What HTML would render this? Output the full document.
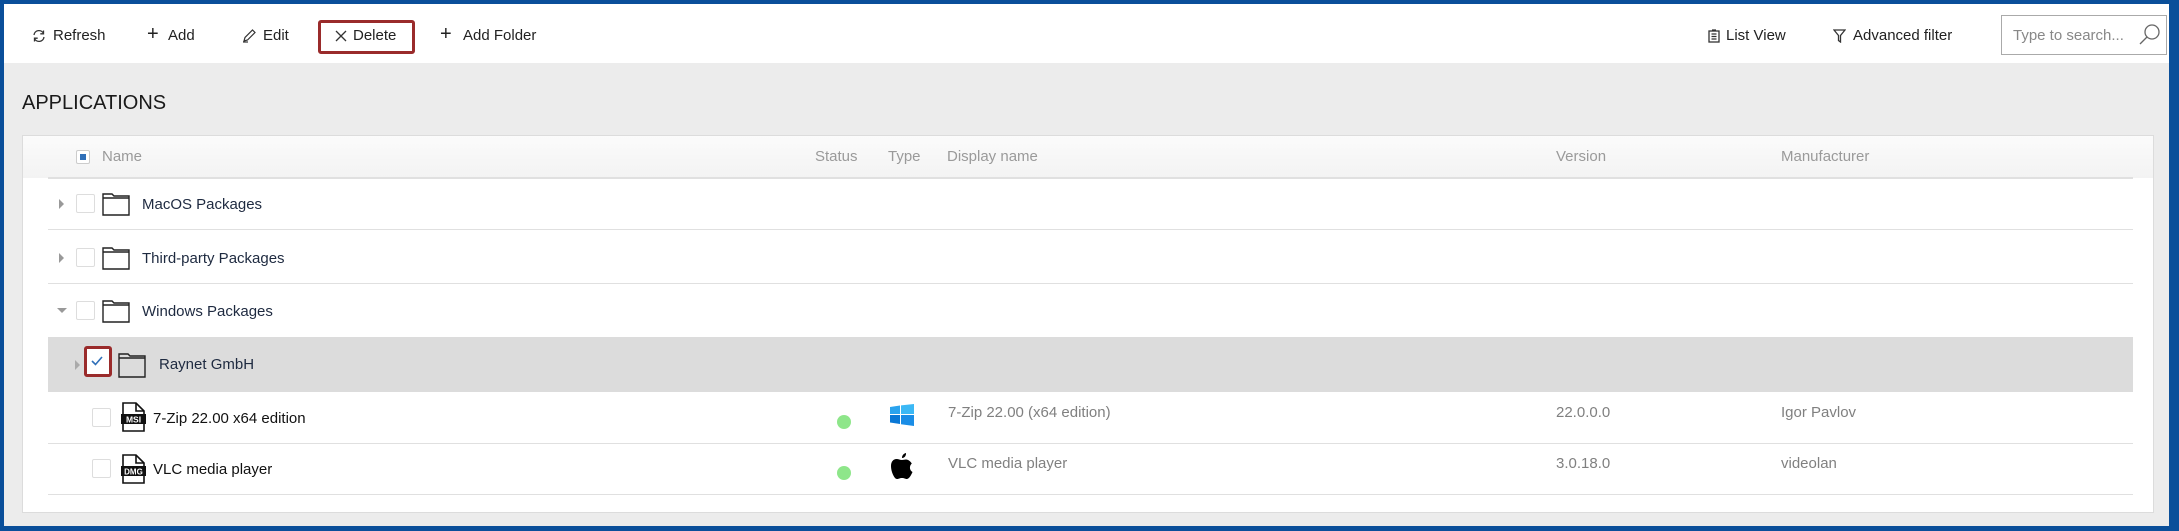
<!DOCTYPE html>
<html><head><meta charset="utf-8"><style>
*{box-sizing:border-box;margin:0;padding:0}
body{width:2179px;height:531px;background:#0a4f9a;position:relative;overflow:hidden;font-family:"Liberation Sans",sans-serif;}
.main{position:absolute;left:4px;top:4px;width:2165px;height:522px;background:#ececec;}
.tb{position:absolute;left:0;top:0;width:100%;height:59px;background:#fff;}
.a{position:absolute;white-space:nowrap;}
.t{font-size:15px;color:#222;line-height:18px;}
.panel{position:absolute;left:18px;top:131px;width:2132px;height:378px;background:#fff;border:1px solid #dcdcdc;}
.hdr{position:absolute;left:0;top:0;width:100%;height:42px;background:linear-gradient(#fbfbfb,#f3f3f3);}
.h{font-size:15px;color:#9a9a9a;line-height:18px;}
.line{position:absolute;left:25px;width:2085px;height:2px;background:#e0e0e0;}
.cb{position:absolute;width:19px;height:19px;border:1px solid #ddd;background:#fff;border-radius:2px;}
.n{font-size:15px;color:#1e2a40;line-height:18px;}
.g{font-size:15px;color:#808080;line-height:18px;}
.arr{position:absolute;width:0;height:0;border-top:5px solid transparent;border-bottom:5px solid transparent;border-left:5px solid #999;}
.dot{position:absolute;width:14px;height:14px;border-radius:50%;background:#8ee68a;}
</style></head><body>
<div class="main">
 <div class="tb">
  <svg class="a" style="left:28px;top:25px" width="14" height="14" viewBox="0 0 14 14" fill="none" stroke="#333" stroke-width="1.3"><path d="M2 6A5 5 0 0 1 11.5 4.5M12 8A5 5 0 0 1 2.5 9.5"/><path d="M11.5 1.5V4.8H8.3M2.5 12.5V9.2H5.7"/></svg>
  <div class="a t" style="left:49px;top:23px">Refresh</div>
  <div class="a t" style="left:143px;top:21px;font-size:20px">+</div>
  <div class="a t" style="left:164px;top:23px">Add</div>
  <svg class="a" style="left:238px;top:25px" width="14" height="14" viewBox="0 0 14 14" fill="none" stroke="#333" stroke-width="1.2"><path d="M2 12L3 8.5L10.5 1L13 3.5L5.5 11Z"/><path d="M1 13H6"/></svg>
  <div class="a t" style="left:259px;top:23px">Edit</div>
  <div class="a" style="left:314px;top:16px;width:97px;height:34px;border:3px solid #9a2b2b;border-radius:3px"></div>
  <svg class="a" style="left:331px;top:26px" width="12" height="12" viewBox="0 0 12 12" stroke="#333" stroke-width="1.3"><path d="M1 1L11 11M11 1L1 11"/></svg>
  <div class="a t" style="left:349px;top:23px">Delete</div>
  <div class="a t" style="left:436px;top:21px;font-size:20px">+</div>
  <div class="a t" style="left:459px;top:23px">Add Folder</div>
  <svg class="a" style="left:1704px;top:25px" width="12" height="14" viewBox="0 0 12 14" fill="none" stroke="#333" stroke-width="1.3"><rect x="1" y="2" width="10" height="11"/><path d="M3.5 5H8.5M3.5 7.5H8.5M3.5 10H8.5M4 1H8"/></svg>
  <div class="a t" style="left:1722px;top:23px">List View</div>
  <svg class="a" style="left:1829px;top:25px" width="13" height="14" viewBox="0 0 13 14" fill="none" stroke="#333" stroke-width="1.3"><path d="M1 1H12L7.5 6.5V13L5.5 11.5V6.5Z"/></svg>
  <div class="a t" style="left:1849px;top:23px">Advanced filter</div>
  <div class="a" style="left:1997px;top:11px;width:166px;height:40px;border:1px solid #aaa;background:#fff"></div>
  <div class="a t" style="left:2009px;top:23px;color:#888">Type to search...</div>
  <svg class="a" style="left:2134px;top:18px" width="24" height="24" viewBox="0 0 24 24" fill="none" stroke="#666" stroke-width="1.3"><circle cx="14" cy="10" r="7"/><path d="M9 15L2 22"/></svg>
 </div>
 <div class="a" style="left:18px;top:87px;font-size:20px;color:#1a1a1a;line-height:24px">APPLICATIONS</div>
 <div class="panel">
  <div class="hdr"></div>
  <div class="cb" style="left:53px;top:14px;width:14px;height:14px;border-color:#ccc"><div style="position:absolute;left:3px;top:3px;width:6px;height:6px;background:#2f6fb8"></div></div>
  <div class="a h" style="left:79px;top:12px">Name</div>
  <div class="a h" style="left:792px;top:12px">Status</div>
  <div class="a h" style="left:865px;top:12px">Type</div>
  <div class="a h" style="left:924px;top:12px">Display name</div>
  <div class="a h" style="left:1533px;top:12px">Version</div>
  <div class="a h" style="left:1758px;top:12px">Manufacturer</div>
  <div class="line" style="top:41px"></div>

  <div class="arr" style="left:36px;top:63px"></div>
  <div class="cb" style="left:53px;top:58px"></div>
  <svg class="a" style="left:79px;top:56px" width="28" height="24" viewBox="0 0 28 24" fill="none" stroke="#222" stroke-width="1.4"><path d="M1 2H10L12 4H27V23H1Z M1 6H27"/></svg>
  <div class="a n" style="left:119px;top:60px">MacOS Packages</div>
  <div class="line" style="top:93px;height:1px"></div>
  <div class="arr" style="left:36px;top:117px"></div>
  <div class="cb" style="left:53px;top:112px"></div>
  <svg class="a" style="left:79px;top:110px" width="28" height="24" viewBox="0 0 28 24" fill="none" stroke="#222" stroke-width="1.4"><path d="M1 2H10L12 4H27V23H1Z M1 6H27"/></svg>
  <div class="a n" style="left:119px;top:114px">Third-party Packages</div>
  <div class="line" style="top:147px;height:1px"></div>
  <div class="a" style="left:34px;top:172px;border-left:5px solid transparent;border-right:5px solid transparent;border-top:5px solid #999"></div>
  <div class="cb" style="left:53px;top:165px"></div>
  <svg class="a" style="left:79px;top:163px" width="28" height="24" viewBox="0 0 28 24" fill="none" stroke="#222" stroke-width="1.4"><path d="M1 2H10L12 4H27V23H1Z M1 6H27"/></svg>
  <div class="a n" style="left:119px;top:167px">Windows Packages</div>
  <div class="a" style="left:25px;top:201px;width:2085px;height:55px;background:#dcdcdc"></div>
  <div class="arr" style="left:52px;top:224px;border-left-color:#aaa"></div>
  <div class="a" style="left:61px;top:210px;width:28px;height:31px;border:3px solid #9a2b2b;border-radius:3px;background:#fff"></div>
  <svg class="a" style="left:67px;top:219px" width="14" height="12" viewBox="0 0 14 12" fill="none" stroke="#2f6fb8" stroke-width="1.6"><path d="M2 6L5.5 9.5L12 2"/></svg>
  <svg class="a" style="left:95px;top:216px" width="28" height="26" viewBox="0 0 28 26" fill="none" stroke="#222" stroke-width="1.4"><path d="M1 2H10L12 4H27V25H1Z M1 6H27"/></svg>
  <div class="a n" style="left:136px;top:220px">Raynet GmbH</div>
  <div class="cb" style="left:69px;top:272px"></div>
  <svg class="a" style="left:98px;top:266px" width="25" height="30" viewBox="0 0 25 30"><path d="M2 1H15L23 9V29H2Z" fill="#fff" stroke="#111" stroke-width="1.6"/><path d="M15 1V9H23" fill="none" stroke="#111" stroke-width="1.6"/><rect x="0" y="12" width="25" height="10" fill="#111"/><text x="12.5" y="20.5" font-size="8.5" font-weight="bold" fill="#fff" text-anchor="middle" font-family="Liberation Sans,sans-serif">MSI</text></svg>
  <div class="a n" style="left:130px;top:274px;color:#111">7-Zip 22.00 x64 edition</div>
  <div class="dot" style="left:814px;top:279px"></div>
  <svg class="a" style="left:867px;top:268px" width="24" height="22" viewBox="0 0 24 22"><path d="M0 3L10 1.5V10H0Z" fill="#2aa3ee"/><path d="M11 1.4L24 0V10H11Z" fill="#3bb8f5"/><path d="M0 11H10V20L0 18.5Z" fill="#0a78d6"/><path d="M11 11H24V22L11 20.2Z" fill="#1a8de6"/></svg>
  <div class="a g" style="left:925px;top:268px">7-Zip 22.00 (x64 edition)</div>
  <div class="a g" style="left:1533px;top:268px">22.0.0.0</div>
  <div class="a g" style="left:1758px;top:268px">Igor Pavlov</div>
  <div class="line" style="top:307px;height:1px"></div>
  <div class="cb" style="left:69px;top:323px"></div>
  <svg class="a" style="left:98px;top:318px" width="25" height="30" viewBox="0 0 25 30"><path d="M2 1H15L23 9V29H2Z" fill="#fff" stroke="#111" stroke-width="1.6"/><path d="M15 1V9H23" fill="none" stroke="#111" stroke-width="1.6"/><rect x="0" y="12" width="25" height="10" fill="#111"/><text x="12.5" y="20.5" font-size="8" font-weight="bold" fill="#fff" text-anchor="middle" font-family="Liberation Sans,sans-serif">DMG</text></svg>
  <div class="a n" style="left:130px;top:325px;color:#111">VLC media player</div>
  <div class="dot" style="left:814px;top:330px"></div>
  <svg class="a" style="left:868px;top:316px" width="22" height="28" viewBox="0 0 22 28"><path d="M15 1C15.3 3.5 13.5 6 11 6C10.8 3.7 12.7 1.3 15 1Z" fill="#000"/><path d="M11 8C9 8 7.5 7 5.5 7C2.5 7 0 9.5 0 14C0 20 3.5 27 6 27C8 27 8.5 26 11 26C13.5 26 14 27 16 27C18 27 20.5 22.5 21.5 20C18.5 18.5 18 14 20.8 11.5C19.5 9.5 17.5 7.5 15 7.5C13.5 7.5 12.5 8 11 8Z" fill="#000"/></svg>
  <div class="a g" style="left:925px;top:319px">VLC media player</div>
  <div class="a g" style="left:1533px;top:319px">3.0.18.0</div>
  <div class="a g" style="left:1758px;top:319px">videolan</div>
  <div class="line" style="top:358px;height:1px"></div>
 </div>
</div>
</body></html>
